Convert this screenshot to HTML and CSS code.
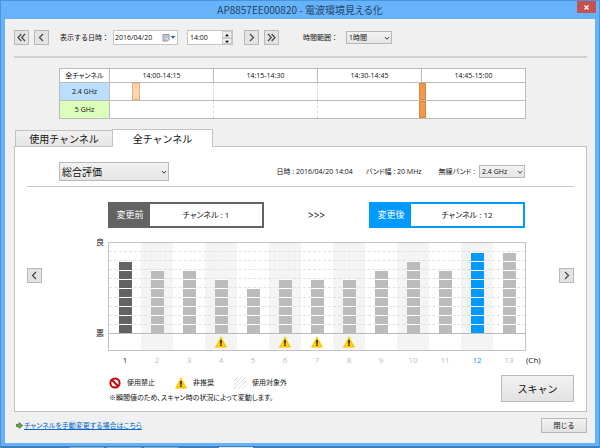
FILE: index.html
```html
<!DOCTYPE html>
<html lang="ja">
<head>
<meta charset="utf-8">
<meta name="viewport" content="width=device-width, initial-scale=1">
<title>AP8857EE000820 - 電波環境見える化</title>
<link rel="stylesheet" href="styles.css">
</head>
<body>
<svg class="defs" aria-hidden="true">
  <symbol id="left" viewBox="0 0 13 13"><path d="M8 3 4.5 6.5 8 10"/></symbol>
  <symbol id="right" viewBox="0 0 13 13"><path d="M5 3 8.500 6.500 5 10"/></symbol>
  <symbol id="first" viewBox="0 0 13 13"><path d="M6.300 3 3 6.500 6.300 10M10 3 6.700 6.500 10 10"/></symbol>
  <symbol id="last" viewBox="0 0 13 13"><path d="M3 3 6.300 6.500 3 10M6.700 3 10 6.500 6.700 10"/></symbol>
  <symbol id="down" viewBox="0 0 6 6"><path d="M1 2 3 4.300 5 2"/></symbol>
  <symbol id="warn" viewBox="0 0 12 12"><path d="M6 .8 11.600 11.200H.4z" fill="#fc0" stroke="#f5bd00" stroke-width=".6" stroke-linejoin="round"/><path d="M5.200 4h1.600v3.800H5.200zM5.200 8.600h1.600v1.500H5.200z" fill="#222"/></symbol>
</svg>
<header class="titlebar">
  <h1>AP8857EE000820 - 電波環境見える化</h1>
  <button class="window-close" aria-label="ウィンドウを閉じる"><svg viewBox="0 0 7 7"><path d="M1.500 1.500 5.500 5.500M5.500 1.500 1.500 5.500"/></svg></button>
</header>
<main class="window">
  <form class="toolbar">
    <button type="button" class="nav" aria-label="最初"><svg><use href="#first"/></svg></button>
    <button type="button" class="nav" aria-label="前へ"><svg><use href="#left"/></svg></button>
    <label class="date-label" for="date">表示する日時：</label>
    <div class="date-field">
      <input id="date" value="2016/04/20">
      <button type="button" class="calendar" aria-label="カレンダー"><svg viewBox="0 0 14 9"><path d="M1 1.500h6v5L5.500 8H1z" fill="#dde1ea" stroke="#858a98"/><path d="M1 2h6M2 4h4M2 6h3" stroke="#a2a7b3" fill="none"/><path d="M8.500 3h5L11 5.700z" fill="#345d8c"/></svg></button>
    </div>
    <div class="time-field">
      <input aria-label="時刻" value="14:00">
      <div class="spinner">
        <button type="button" aria-label="進める"><svg viewBox="0 0 8 6"><path d="M2 4.200 4 2l2 2.200z"/></svg></button>
        <button type="button" aria-label="戻す"><svg viewBox="0 0 8 6"><path d="M2 1.800 4 4l2-2.200z"/></svg></button>
      </div>
    </div>
    <button type="button" class="nav next" aria-label="次へ"><svg><use href="#right"/></svg></button>
    <button type="button" class="nav" aria-label="最後"><svg><use href="#last"/></svg></button>
    <label class="range-label" for="range">時間範囲：</label>
    <div class="select small"><select id="range"><option>1時間</option></select><svg><use href="#down"/></svg></div>
  </form>

  <table class="timeline">
    <thead><tr><th>全チャンネル</th><th>14:00-14:15</th><th>14:15-14:30</th><th>14:30-14:45</th><th>14:45-15:00</th></tr></thead>
    <tbody>
      <tr><th class="band24">2.4 GHz</th><td><i class="mark light"></i></td><td></td><td></td><td><i class="mark"></i></td></tr>
      <tr><th class="band5">5 GHz</th><td></td><td></td><td></td><td><i class="mark"></i></td></tr>
    </tbody>
  </table>

  <div class="tabs" role="tablist">
    <button role="tab" aria-selected="false">使用チャンネル</button>
    <button role="tab" aria-selected="true">全チャンネル</button>
  </div>
  <section class="panel">
    <div class="filters">
      <div class="select large"><select aria-label="評価"><option>総合評価</option></select><svg><use href="#down"/></svg></div>
      <span class="when">日時 : 2016/04/20 14:04</span>
      <span class="width">バンド幅 : 20 MHz</span>
      <label for="band">無線バンド :</label>
      <div class="select small"><select id="band"><option>2.4 GHz</option></select><svg><use href="#down"/></svg></div>
    </div>
    <div class="compare">
      <div class="change"><b>変更前</b><span>チャンネル : 1</span></div>
      <div class="arrows">&gt;&gt;&gt;</div>
      <div class="change after"><b>変更後</b><span>チャンネル : 12</span></div>
    </div>
    <div class="chart-row">
      <button class="nav" aria-label="前のグラフ"><svg><use href="#left"/></svg></button>
      <div class="axis"><span>良</span><span>悪</span></div>
      <div class="chart" id="chart"><div class="grid" id="grid"></div></div>
      <span class="unit">(Ch)</span>
      <button class="nav" aria-label="次のグラフ"><svg><use href="#right"/></svg></button>
    </div>
    <div class="bottom">
      <div class="notes">
        <ul class="legend">
          <li><svg viewBox="0 0 12 12"><circle cx="6" cy="6" r="4.600" fill="#fff" stroke="#c8040e" stroke-width="2"/><path d="M2.800 2.800 9.200 9.200" stroke="#c8040e" stroke-width="2"/></svg>使用禁止</li>
          <li><svg><use href="#warn"/></svg>非推奨</li>
          <li><svg viewBox="0 0 12 12"><path d="M0 4 4 0M0 8 8 0M0 12 12 0M4 12 12 4M8 12 12 8" stroke="#d4d4d4" stroke-width=".8"/></svg>使用対象外</li>
        </ul>
        <p>※瞬間値のため、スキャン時の状況によって変動します。</p>
      </div>
      <button class="scan">スキャン</button>
    </div>
  </section>
  <footer>
    <svg viewBox="0 0 7 7"><path d="M.5 2.400h2.700V.6L6.500 3.500 3.200 6.400V4.600H.5z" fill="#72ae48" stroke="#35672a" stroke-width=".8"/></svg>
    <a href="#manual">チャンネルを手動変更する場合はこちら</a>
    <button class="close">閉じる</button>
  </footer>
</main>
<div class="taskbar" aria-hidden="true"><i></i><i></i><i></i><i class="active"></i></div>
<script src="chart.js"></script>
</body>
</html>
```
FILE: styles.css
```css
* { box-sizing: border-box; }
body {
  margin: 0;
  min-height: 100vh;
  display: flex;
  flex-direction: column;
  background: #66b3fc;
  border: solid #4b94d8;
  border-width: 1px 1px 0 1px;
  color: #111;
  font: 7px/10px "Open Sans", "Noto Sans CJK JP", sans-serif;
}
button, input, select { font: inherit; color: inherit; margin: 0; padding: 0; border-radius: 0; }
svg { display: block; }
.defs { position: absolute; width: 0; height: 0; }

.titlebar { display: grid; grid-template-columns: 1fr; height: 18px; }
.titlebar h1 {
  grid-area: 1 / 1;
  margin: 0;
  text-align: center;
  font-family: "Noto Sans CJK JP", sans-serif;
  font-size: 10px;
  line-height: 18px;
  font-weight: 400;
  font-feature-settings: "palt";
  color: #24435f;
}
.window-close {
  grid-area: 1 / 1;
  justify-self: end;
  width: 19px;
  height: 12px;
  margin-right: 3px;
  display: grid;
  place-items: center;
  border: 0;
  background: #c75050;
}
.window-close svg { width: 7px; height: 7px; stroke: #fff; stroke-width: 1.300; }

.window { flex: 1; margin: 0 4px; padding: 11px 8px 0 9px; background: #f0f0f0; }
.toolbar { display: flex; align-items: center; padding-bottom: 11px; border-bottom: 2px solid #d2d2d2; }
.nav {
  width: 15px;
  height: 15px;
  flex: none;
  border: 1px solid #b8b8b8;
  background: #e3e3e3;
}
.nav svg { width: 13px; height: 13px; fill: none; stroke: #444; stroke-width: 1.200; }
.nav + .nav { margin-left: 5px; }
.date-label { width: 53px; margin-left: 11px; white-space: nowrap; }
.date-field, .time-field { display: flex; height: 15px; background: #fff; border: 1px solid #c4c4c4; }
.date-field { width: 65px; }
.date-field input, .time-field input { flex: 1; min-width: 0; border: 0; background: none; padding-left: 1px; }
.time-field input { padding-left: 2px; }
.calendar { width: 15px; border: 0; background: none; }
.calendar svg { width: 14px; height: 9px; }
.time-field { width: 46px; margin-left: 9px; }
.spinner { width: 10px; display: flex; flex-direction: column; }
.spinner button { flex: 1; min-height: 0; border: 1px solid #ccc; background: #f0f0f0; display: grid; place-items: center; }
.spinner svg { width: 8px; height: 6px; }
.next { margin-left: 11px; }
.range-label { width: 43px; margin-left: 24px; white-space: nowrap; }

.select { display: grid; align-items: center; }
.select select {
  grid-area: 1 / 1;
  appearance: none;
  width: 100%;
  padding-left: 2px;
  border: 1px solid #b8b8b8;
  background: linear-gradient(#f2f2f2, #e5e5e5);
}
.select svg {
  grid-area: 1 / 1;
  justify-self: end;
  width: 6px;
  height: 6px;
  margin-right: 2px;
  fill: none;
  stroke: #444;
  pointer-events: none;
}
.small { width: 46px; }
.small select { height: 13px; }
.large { width: 110px; }
.large select { height: 19px; font-size: 10px; }

.timeline {
  width: calc(100% - 106px);
  margin: 10px 0 0 45px;
  border: 1px solid #bbb;
  border-collapse: collapse;
  table-layout: fixed;
  background: #fff;
}
.timeline th, .timeline td { height: 18px; padding: 0; font-weight: 400; }
.timeline th { border: 1px solid #bbb; }
.timeline td { border-bottom: 1px solid #bbb; }
.timeline thead th { height: 14px; }
.timeline thead th:first-child { width: 50px; font-feature-settings: "palt"; }
.timeline td + td { border-left: 1px dashed #ddd; }
.band24 { background: #bbdefe; }
.band5 { background: #dcfebb; }
.mark { display: block; position: relative; width: 7px; height: 17px; margin-left: -3px; background: #f2974f; border: 1px solid #df8538; }
.mark.light { width: 8px; margin-left: 22px; background: #fdd5b4; border-color: #f4b06c; }

.tabs { display: flex; align-items: flex-end; margin-top: 10px; padding-left: 1px; }
.tabs button {
  width: 98px;
  height: 16px;
  border: 1px solid #c3c3c3;
  border-bottom: 0;
  background: linear-gradient(#f1f1f1, #e4e4e4);
  font-size: 10px;
  line-height: 16px;
}
.tabs [aria-selected="true"] { width: 101px; height: 18px; margin: 0 0 -1px -1px; background: #fff; z-index: 1; }
.panel { padding: 15px 12px 8px; border: 1px solid #c3c3c3; background: #fff; }
.filters { display: flex; align-items: center; padding: 0 49px 5px 32px; border-bottom: 1px solid #c8c8c8; white-space: nowrap; }
.filters span, .filters label { font-feature-settings: "palt"; }
.when { margin-left: auto; }
.width { margin: 0 17px 0 13px; }
.filters label { margin-right: 4px; }

.compare { display: flex; justify-content: space-between; align-items: center; margin: 15px 49px 14px 81px; }
.change { display: flex; width: 156px; height: 26px; border: 2px solid #636363; background: #636363; }
.change b { width: 40px; color: #fff; font-size: 9px; line-height: 22px; font-weight: 400; text-align: center; }
.change span { flex: 1; background: #fff; font-size: 8px; line-height: 22px; text-align: center; font-feature-settings: "palt"; }
.after { border-color: #09f; background: #09f; }
.arrows { font-size: 10px; }

.chart-row { display: flex; }
.chart-row > .nav { margin: 26px 0 0; }
.axis { width: 66px; height: 101px; margin-top: -5px; padding-right: 4px; display: flex; flex-direction: column; justify-content: space-between; text-align: right; font-size: 8px; }
.chart { flex: 1; display: flex; position: relative; margin-bottom: 16px; border: 1px solid #c3c3c3; }
.channel { flex: 1; height: 107px; display: flex; flex-direction: column; color: #bbb; }
.channel:nth-child(odd) { background: #f4f4f4; }
.plot { height: 91px; flex: none; display: flex; align-items: flex-end; justify-content: center; border-bottom: 1px solid #bbb; }
.bar { position: relative; width: 13px; display: flex; flex-direction: column; }
.bar i { flex: 1; background: currentColor; border-top: 1px solid #fff; }
.flag { height: 16px; flex: none; display: grid; place-items: center; }
.flag svg { width: 12px; height: 12px; }
.name { padding-top: 5px; text-align: center; font-size: 8px; }
.channel.current { color: #636363; }
.channel.current .name { color: #222; }
.channel.best { color: #09f; }
.grid { position: absolute; top: 0; left: 0; right: 0; height: 90px; display: flex; flex-direction: column; }
.grid i { flex: 1; border-bottom: 1px dashed #e2e2e2; }
.grid i:last-child { border: 0; }
.unit { width: 33px; align-self: flex-end; padding-bottom: 2px; font-size: 8px; }

.bottom { display: flex; justify-content: space-between; align-items: flex-start; margin-top: 8px; padding-left: 82px; }
.legend { display: flex; margin: 0; padding: 2px 0 0; list-style: none; }
.legend li { display: flex; align-items: center; margin-right: 20px; }
.legend svg { width: 12px; height: 12px; margin-right: 6px; }
.notes p { margin: 4px 0 0; font-feature-settings: "palt"; }
.scan, .close { border: 1px solid #b8b8b8; background: linear-gradient(#f2f2f2, #e2e2e2); }
.scan { width: 73px; height: 27px; font-size: 10px; }
footer { display: flex; align-items: center; padding: 6px 0 9px 2px; }
footer svg { width: 7px; height: 7px; margin-right: 1px; }
footer a { color: #0066c8; font-feature-settings: "palt"; }
.close { width: 46px; height: 15px; margin-left: auto; }

.taskbar { display: flex; gap: 3px; height: 5px; padding: 4px 0 0 69px; background: linear-gradient(#66b3fc 3px, #3f7fbd 3px); }
.taskbar i { width: 34px; height: 1px; background: #8fb0cc; }
.taskbar .active { margin-left: 38px; background: #dce8f2; }
```
FILE: chart.js
```js
const channels = [
  { n: 1, score: 8, state: "current" },
  { n: 2, score: 7 },
  { n: 3, score: 7 },
  { n: 4, score: 6, warn: true },
  { n: 5, score: 5 },
  { n: 6, score: 6, warn: true },
  { n: 7, score: 6, warn: true },
  { n: 8, score: 6, warn: true },
  { n: 9, score: 7 },
  { n: 10, score: 8 },
  { n: 11, score: 7 },
  { n: 12, score: 9, state: "best" },
  { n: 13, score: 9 }
];
document.getElementById("grid").innerHTML = "<i></i>".repeat(10);
document.getElementById("chart").insertAdjacentHTML("beforeend", channels.map(c => `
  <div class="channel ${c.state || ""}">
    <div class="plot"><div class="bar" style="height:${c.score * 10}%">${"<i></i>".repeat(c.score)}</div></div>
    <div class="flag">${c.warn ? '<svg><use href="#warn"/></svg>' : ""}</div>
    <div class="name">${c.n}</div>
  </div>`).join(""));
```
